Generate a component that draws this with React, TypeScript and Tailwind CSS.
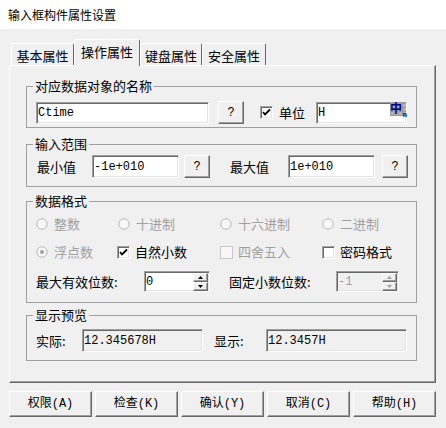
const sans = "font-['Noto_Sans_CJK_SC',sans-serif]";
const mono = "font-['Liberation_Mono','Noto_Sans_CJK_SC',monospace]";

const sunken =
  "border border-t-[#a0a0a0] border-l-[#a0a0a0] border-r-white border-b-white shadow-[inset_1px_1px_0_#696969,inset_-1px_-1px_0_#e3e3e3]";
const raised =
  "border border-t-white border-l-white border-r-[#696969] border-b-[#696969] shadow-[inset_-1px_-1px_0_#a0a0a0]";

function Group({ title, className = "", children }: { title: string; className?: string; children: React.ReactNode }) {
  return (
    <fieldset className={"w-[391px] border border-[#a0a0a0] " + className}>
      <legend className="ml-[6px] px-[2px] text-[13px] leading-[16px]">{title}</legend>
      {children}
    </fieldset>
  );
}

function Field({ value, w, h = 23, gray = false, className = "", children }: { value: string; w: number; h?: number; gray?: boolean; className?: string; children?: React.ReactNode }) {
  return (
    <div
      className={`${sunken} ${gray ? "bg-[#f0f0f0]" : "bg-white"} relative flex items-center pl-[1px] text-[12px] ${mono} ${className}`}
      style={{ width: w, height: h }}
    >
      <span className="flex-1 leading-none">{value}</span>
      {children}
    </div>
  );
}

function Ask({ className = "" }: { className?: string }) {
  return (
    <button className={`${raised} w-[26px] h-[23px] bg-[#f0f0f0] flex items-center justify-center text-[12px] ${mono} ${className}`}>
      ?
    </button>
  );
}

function Check({ checked = false, disabled = false }: { checked?: boolean; disabled?: boolean }) {
  return (
    <span
      className={`w-[13px] h-[13px] shrink-0 flex items-center justify-center ${
        disabled ? "border border-[#c8c8c8] bg-[#f7f7f7]" : sunken + " bg-white"
      }`}
    >
      {checked && (
        <svg width="9" height="9" viewBox="0 0 9 9">
          <polyline points="1,4 3,6.5 8,1.5" fill="none" stroke="#000" strokeWidth="1.8" />
        </svg>
      )}
    </span>
  );
}

function Radio({ label, checked = false }: { label: string; checked?: boolean }) {
  return (
    <div className="flex items-center h-[16px]">
      <svg width="12" height="12" viewBox="0 0 12 12" className="shrink-0">
        <circle cx="6" cy="6" r="5.2" fill="#f7f7f7" stroke="#b9b9b9" strokeWidth="1" />
        {checked && <circle cx="6" cy="6" r="2" fill="#a0a0a0" />}
      </svg>
      <span className="ml-[6px] text-[13px] leading-[16px] text-[#a0a0a0]">{label}</span>
    </div>
  );
}

function CheckItem({ label, checked = false, disabled = false }: { label: string; checked?: boolean; disabled?: boolean }) {
  return (
    <div className="flex items-center h-[16px]">
      <Check checked={checked} disabled={disabled} />
      <span className={`ml-[5px] text-[13px] leading-[16px] ${disabled ? "text-[#a0a0a0]" : "text-black"}`}>{label}</span>
    </div>
  );
}

function SpinArrow({ up, disabled }: { up: boolean; disabled?: boolean }) {
  return (
    <div className={`${raised} h-[9px] bg-[#f0f0f0] flex items-center justify-center`}>
      <svg width="5" height="3" viewBox="0 0 5 3">
        <polygon points={up ? "2.5,0 5,3 0,3" : "0,0 5,0 2.5,3"} fill={disabled ? "#a0a0a0" : "#000"} />
      </svg>
    </div>
  );
}

function Spin({ value, w, disabled = false }: { value: string; w: number; disabled?: boolean }) {
  return (
    <Field value={value} w={w} h={21} gray={disabled} className={disabled ? "text-[#a0a0a0]" : ""}>
      <div className="w-[15px] mr-[1px] flex flex-col">
        <SpinArrow up disabled={disabled} />
        <SpinArrow up={false} disabled={disabled} />
      </div>
    </Field>
  );
}

function Tab({ label, w, active = false }: { label: string; w: number; active?: boolean }) {
  return (
    <div
      className={`border-t border-l border-r border-t-white border-l-white border-r-[#696969] rounded-t-[2px] bg-[#f0f0f0] flex justify-center text-[13px] leading-[16px] ${
        active ? "relative z-10 h-[27px] -mb-[1px] pt-[4px]" : "h-[22px] pt-[4px]"
      }`}
      style={{ width: w }}
    >
      {label}
    </div>
  );
}

export default function App() {
  return (
    <div className={`w-[446px] h-[428px] bg-[#f0f0f0] text-black overflow-hidden ${sans}`}>
      <div className="h-[29px] bg-white flex items-center pl-[8px] text-[12px]">输入框构件属性设置</div>

      <div className="pl-[9px] pt-[10px]">
        <div className="flex items-end h-[26px] pl-[2px]">
          <Tab label="基本属性" w={63} />
          <Tab label="操作属性" w={66} active />
          <Tab label="键盘属性" w={62} />
          <Tab label="安全属性" w={64} />
        </div>

        <div className={`${raised} w-[427px] h-[318px] pl-[16px] pt-[12px]`}>
          <Group title="对应数据对象的名称">
            <div className="flex items-center pl-[9px] pt-[7px] pb-[3px]">
              <Field value="Ctime" w={173} h={22} />
              <Ask className="ml-[9px]" />
              <div className="ml-[16px]">
                <Check checked />
              </div>
              <span className="ml-[6px] w-[37px] text-[13px] leading-[16px]">单位</span>
              <Field value="H" w={91} h={22}>
                <div className="absolute right-0 top-0 w-[16px] h-[13px] bg-[#b4b4b4] bg-[linear-gradient(#9a9a9a_1px,transparent_1px),linear-gradient(90deg,#9a9a9a_1px,transparent_1px)] bg-[length:4px_4px]">
                  <span className={`absolute left-0 top-[-2px] text-[12px] leading-[14px] font-bold text-[#000080] ${sans}`}>中</span>
                  <span className="absolute right-[-1px] bottom-[-3px] text-[7px] leading-none font-bold text-[#000080]">n</span>
                </div>
              </Field>
            </div>
          </Group>

          <Group title="输入范围" className="mt-[8px]">
            <div className="flex items-center pl-[10px] pt-[3px] pb-[8px]">
              <span className="w-[55px] text-[13px] leading-[16px]">最小值</span>
              <Field value="-1e+010" w={87} />
              <Ask className="ml-[5px]" />
              <span className="ml-[20px] w-[58px] text-[13px] leading-[16px]">最大值</span>
              <Field value="1e+010" w={87} />
              <Ask className="ml-[7px]" />
            </div>
          </Group>

          <Group title="数据格式" className="mt-[6px]">
            <div className="pl-[9px] pt-[7px] pb-[10px]">
              <div className="grid grid-cols-[82px_102px_102px_1fr]">
                <Radio label="整数" />
                <Radio label="十进制" />
                <Radio label="十六进制" />
                <Radio label="二进制" />
              </div>
              <div className="grid grid-cols-[81px_103px_102px_1fr] mt-[12px]">
                <Radio label="浮点数" checked />
                <CheckItem label="自然小数" checked />
                <CheckItem label="四舍五入" disabled />
                <CheckItem label="密码格式" />
              </div>
              <div className="flex items-center mt-[11px]">
                <span className="w-[108px] text-[13px] leading-[16px]">最大有效位数:</span>
                <Spin value="0" w={66} />
                <span className="ml-[19px] w-[107px] text-[13px] leading-[16px]">固定小数位数:</span>
                <Spin value="-1" w={63} disabled />
              </div>
            </div>
          </Group>

          <Group title="显示预览" className="mt-[4px]">
            <div className="flex items-center pl-[9px] pt-[6px] pb-[8px]">
              <span className="w-[46px] text-[13px] leading-[16px]">实际:</span>
              <Field value="12.345678H" w={121} gray />
              <span className="ml-[11px] w-[52px] text-[13px] leading-[16px]">显示:</span>
              <Field value="12.3457H" w={141} gray />
            </div>
          </Group>
        </div>
      </div>

      <div className="flex gap-[3px] pl-[9px] mt-[8px]">
        {["权限(A)", "检查(K)", "确认(Y)", "取消(C)", "帮助(H)"].map((t) => (
          <button key={t} className={`${raised} w-[83px] h-[26px] bg-[#f0f0f0] flex items-center justify-center text-[12px] ${mono}`}>
            {t}
          </button>
        ))}
      </div>
    </div>
  );
}
